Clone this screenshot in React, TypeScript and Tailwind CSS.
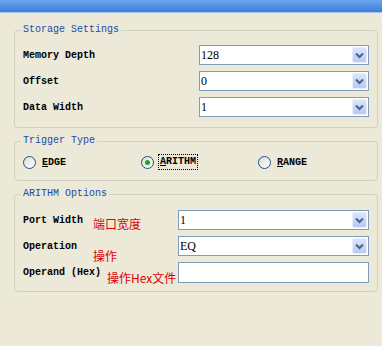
import React from 'react';

const mono = { fontFamily: '"Liberation Mono", "DejaVu Sans Mono", monospace' };

const Chevron: React.FC = () => (
  <svg width="9" height="7" viewBox="0 0 9 7">
    <path d="M1 1.5 L4.5 5 L8 1.5" fill="none" stroke="#4D6185" strokeWidth="2" />
  </svg>
);

const ComboBox: React.FC<{ value: string; width: string }> = ({ value, width }) => (
  <div className={`${width} h-[20px] flex items-stretch border border-[#7F9DB9] bg-white`}>
    <span
      className="flex-1 pl-[1px] text-[12px] leading-[18px] text-black"
      style={{ fontFamily: '"Liberation Serif", serif' }}
    >
      {value}
    </span>
    <span className="w-[15px] m-[1px] flex items-center justify-center rounded-[2px] bg-gradient-to-b from-[#D9E5FC] to-[#B6CAF5] border border-[#E8EEFC]">
      <Chevron />
    </span>
  </div>
);

const Radio: React.FC<{ checked?: boolean }> = ({ checked }) => (
  <span className="w-[13px] h-[13px] rounded-full border border-[#1C5180] bg-gradient-to-br from-[#DCDCD7] to-white flex items-center justify-center">
    {checked && <span className="w-[5px] h-[5px] rounded-full bg-[#21A121]" />}
  </span>
);

const GroupBox: React.FC<{ title: string; className?: string; children: React.ReactNode }> = ({ title, className, children }) => (
  <fieldset className={`mx-[14px] w-[364px] border border-[#D0D0BF] rounded-[4px] px-[8px] ${className ?? ''}`}>
    <legend className="-ml-[2px] px-[2px] text-[10px] leading-[12px] text-[#2349A8]" style={mono}>
      {title}
    </legend>
    {children}
  </fieldset>
);

const Row: React.FC<{ label: string; children: React.ReactNode }> = ({ label, children }) => (
  <div className="flex items-center h-[20px]">
    <span className="flex-1 text-[10px] text-black font-bold">{label}</span>
    {children}
  </div>
);

const Note: React.FC<{ text: string; className: string }> = ({ text, className }) => (
  <span
    className={`text-[12px] leading-[14px] text-[#E00000] relative ${className}`}
    style={{ fontFamily: '"Noto Sans CJK SC", "Noto Sans", sans-serif' }}
  >
    {text}
  </span>
);

export default function App() {
  return (
    <div className="w-[382px] h-[346px] bg-[#ECE9D8] overflow-hidden" style={mono}>
      <div className="h-[13px] bg-gradient-to-b from-[#6AA5EE] to-[#3D7CDB] border-b border-[#A9C8F0]" />

      <GroupBox title="Storage Settings" className="mt-[11px] pt-[9px] pb-[10px]">
        <div className="flex flex-col gap-[6px]">
          <Row label="Memory Depth"><ComboBox value="128" width="w-[170px]" /></Row>
          <Row label="Offset"><ComboBox value="0" width="w-[170px]" /></Row>
          <Row label="Data Width"><ComboBox value="1" width="w-[170px]" /></Row>
        </div>
      </GroupBox>

      <GroupBox title="Trigger Type" className="mt-[7px] pt-[8px] pb-[11px]">
        <div className="flex items-center h-[14px] text-[10px] font-bold text-black">
          <span className="flex items-center gap-[6px]">
            <Radio />
            <span><span className="underline">E</span>DGE</span>
          </span>
          <span className="ml-[75px] flex items-center gap-[4px]">
            <Radio checked />
            <span className="border border-dotted border-black px-[1px] leading-[14px]">
              <span className="underline">A</span>RITHM
            </span>
          </span>
          <span className="ml-[60px] flex items-center gap-[6px]">
            <Radio />
            <span><span className="underline">R</span>ANGE</span>
          </span>
        </div>
      </GroupBox>

      <GroupBox title="ARITHM Options" className="mt-[7px] pt-[10px] pb-[8px]">
        <div className="flex flex-col gap-[6px]">
          <div className="flex items-center h-[20px]">
            <span className="text-[10px] font-bold text-black">Port Width</span>
            <Note text="端口宽度" className="ml-[10px] top-[4px]" />
            <span className="flex-1" />
            <ComboBox value="1" width="w-[191px]" />
          </div>
          <div className="flex items-center h-[20px]">
            <span className="text-[10px] font-bold text-black">Operation</span>
            <Note text="操作" className="ml-[16px] top-[10px]" />
            <span className="flex-1" />
            <ComboBox value="EQ" width="w-[191px]" />
          </div>
          <div className="flex items-center h-[21px]">
            <span className="text-[10px] font-bold text-black">Operand (Hex)</span>
            <Note text="操作Hex文件" className="ml-[6px] top-[5px]" />
            <span className="flex-1" />
            <div className="w-[191px] h-[21px] border border-[#7F9DB9] bg-white" />
          </div>
        </div>
      </GroupBox>
    </div>
  );
}
